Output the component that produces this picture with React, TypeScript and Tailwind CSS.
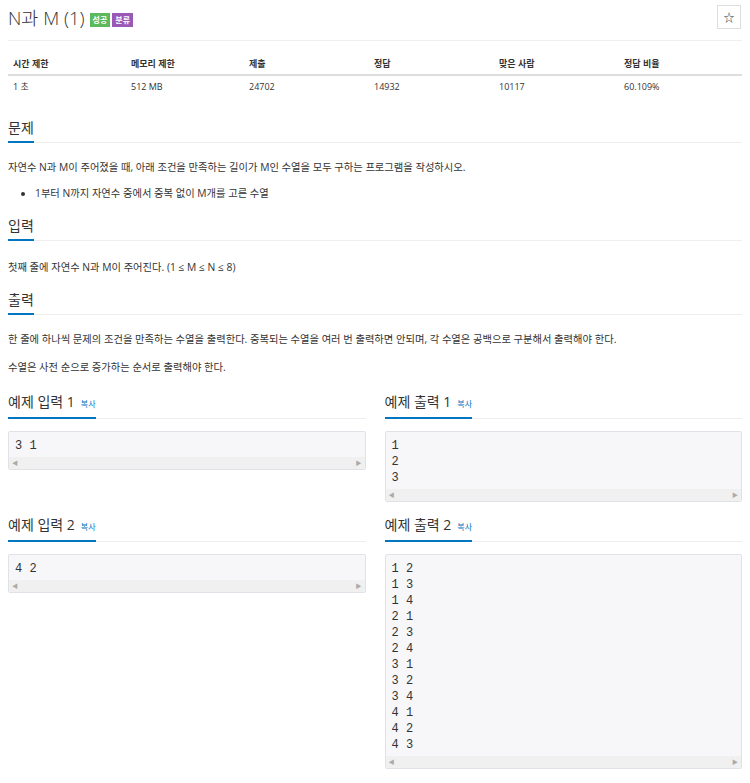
import React from 'react'

const sans = { fontFamily: '"Open Sans", "Noto Sans CJK KR", sans-serif' }

function SectionTitle({ children }: { children: React.ReactNode }) {
  return (
    <div className="border-b border-[#eee] flex">
      <h2 className="text-[14px] leading-[20px] font-normal text-[#333] pb-[3px] border-b-2 border-[#0076c0] -mb-px flex items-baseline gap-[6px]">
        {children}
      </h2>
    </div>
  )
}

function Pre({ lines }: { lines: string[] }) {
  return (
    <div className="mt-[12px] bg-[#f7f7f9] border border-[#e1e1e8] rounded-[2px]">
      <pre className="px-[6px] pt-[6px] pb-[3px] text-[12px] leading-[16px] text-[#333] font-['Liberation_Mono',monospace]">
        {lines.join('\n')}
      </pre>
      <div className="h-[12px] bg-[#f0f0f0] flex items-center justify-between px-[3px] text-[6px] text-[#aaa]">
        <span>◀</span>
        <span>▶</span>
      </div>
    </div>
  )
}

function Sample({ title, lines }: { title: string; lines: string[] }) {
  return (
    <div>
      <SectionTitle>
        {title}
        <span className="text-[8px] text-[#0076c0]">복사</span>
      </SectionTitle>
      <Pre lines={lines} />
    </div>
  )
}

export default function App() {
  const stats = [
    ['시간 제한', '1 초', 'w-[118px]'],
    ['메모리 제한', '512 MB', 'w-[118px]'],
    ['제출', '24702', 'w-[125px]'],
    ['정답', '14932', 'w-[125px]'],
    ['맞은 사람', '10117', 'w-[125px]'],
    ['정답 비율', '60.109%', ''],
  ]
  const out2 = ['1 2', '1 3', '1 4', '2 1', '2 3', '2 4', '3 1', '3 2', '3 4', '4 1', '4 2', '4 3']

  return (
    <div className="w-[750px] bg-white px-2 pb-3 text-[#333]" style={sans}>
      {/* title */}
      <div className="flex items-start justify-between border-b border-[#eee] h-[41px]">
        <div className="flex items-center pt-[6px]">
          <h1 className="text-[18.5px] leading-[24px] font-light text-[#333]">N과 M (1)</h1>
          <span className="ml-[5px] mt-[3px] bg-[#5cb85c] text-white text-[8px] font-bold px-[3px] py-[2px] leading-[10px]">성공</span>
          <span className="ml-[2px] mt-[3px] bg-[#9b59b6] text-white text-[8px] font-bold px-[3px] py-[2px] leading-[10px]">분류</span>
        </div>
        <button className="mt-[5px] mr-px w-[24px] h-[24px] border border-[#ddd] text-[11px] leading-none flex items-center justify-center text-[#333]">
          ☆
        </button>
      </div>

      {/* stats */}
      <table className="w-full table-fixed mt-[12px] text-[9px]">
        <thead>
          <tr className="border-b-2 border-[#ddd]">
            {stats.map(([h, , w]) => (
              <th key={h} className={`${w} text-left font-bold px-[5px] pt-[5px] pb-[4px] leading-[12px]`}>{h}</th>
            ))}
          </tr>
        </thead>
        <tbody>
          <tr>
            {stats.map(([h, v]) => (
              <td key={h} className="px-[5px] py-[5px] leading-[12px]">{v}</td>
            ))}
          </tr>
        </tbody>
      </table>

      {/* problem */}
      <section className="mt-[20px]">
        <SectionTitle>문제</SectionTitle>
        <div className="text-[10.3px] leading-[18px] mt-[15px]">
          <p>자연수 N과 M이 주어졌을 때, 아래 조건을 만족하는 길이가 M인 수열을 모두 구하는 프로그램을 작성하시오.</p>
          <ul className="list-disc pl-[27px] mt-[8px]">
            <li>1부터 N까지 자연수 중에서 중복 없이 M개를 고른 수열</li>
          </ul>
        </div>
      </section>

      <section className="mt-[14px]">
        <SectionTitle>입력</SectionTitle>
        <p className="text-[10.3px] leading-[18px] mt-[17px]">첫째 줄에 자연수 N과 M이 주어진다. (1 ≤ M ≤ N ≤ 8)</p>
      </section>

      <section className="mt-[14px]">
        <SectionTitle>출력</SectionTitle>
        <div className="text-[10.3px] leading-[18px] mt-[15px]">
          <p>한 줄에 하나씩 문제의 조건을 만족하는 수열을 출력한다. 중복되는 수열을 여러 번 출력하면 안되며, 각 수열은 공백으로 구분해서 출력해야 한다.</p>
          <p className="mt-[10px]">수열은 사전 순으로 증가하는 순서로 출력해야 한다.</p>
        </div>
      </section>

      {/* samples */}
      <div className="grid grid-cols-2 gap-x-[19px] gap-y-[13px] mt-[16px]">
        <Sample title="예제 입력 1" lines={['3 1']} />
        <Sample title="예제 출력 1" lines={['1', '2', '3']} />
        <Sample title="예제 입력 2" lines={['4 2']} />
        <Sample title="예제 출력 2" lines={out2} />
      </div>
    </div>
  )
}
